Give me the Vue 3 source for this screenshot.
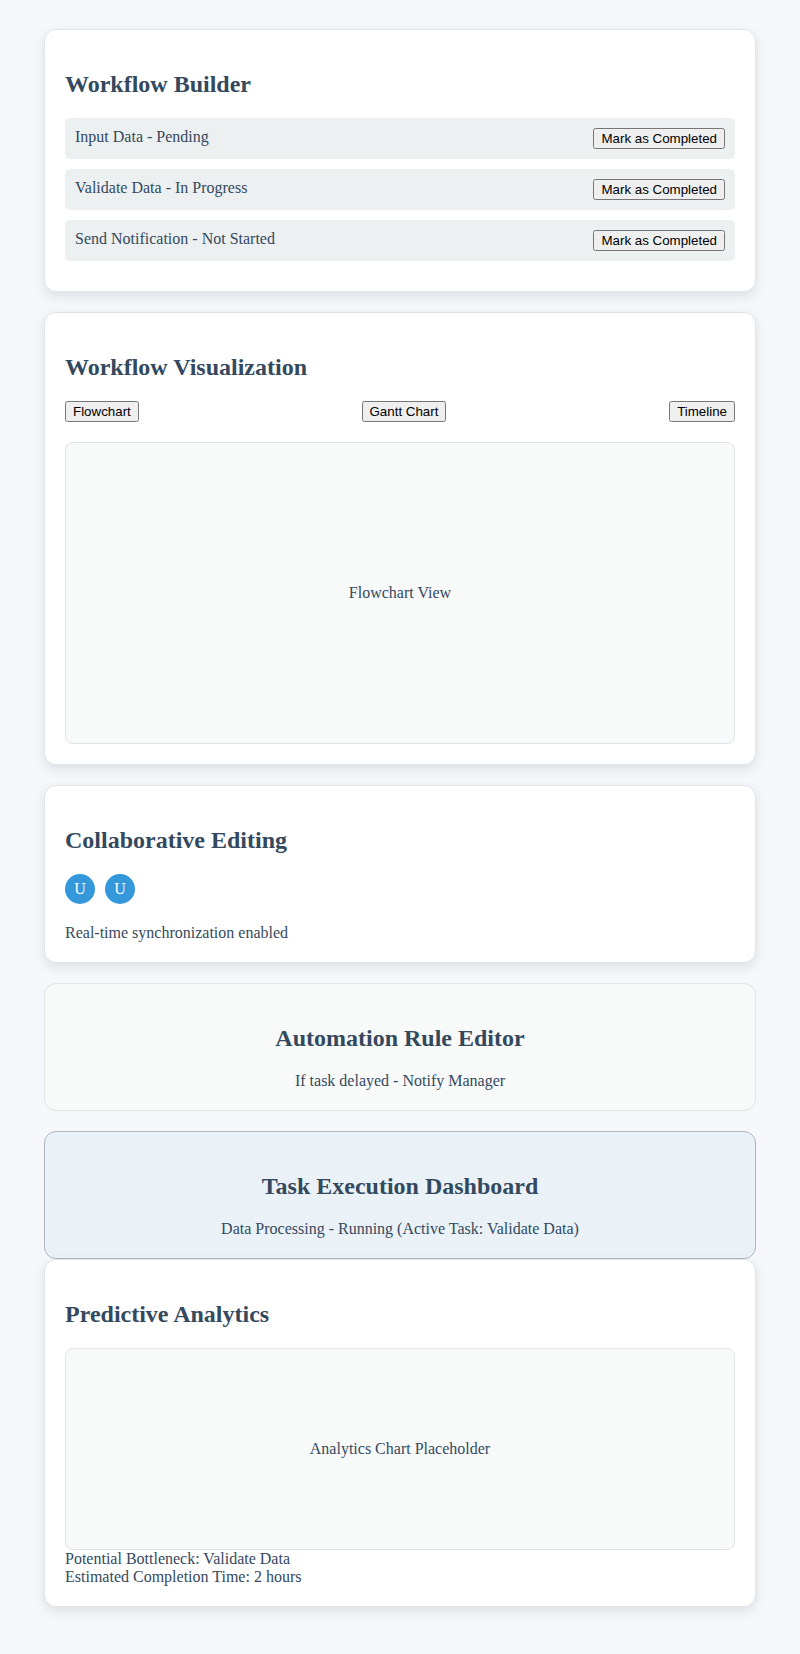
<script setup>
import { ref } from 'vue'

const tasks = ref([
  { name: 'Input Data', status: 'Pending' },
  { name: 'Validate Data', status: 'In Progress' },
  { name: 'Send Notification', status: 'Not Started' },
])
const views = ['Flowchart', 'Gantt Chart', 'Timeline']
const view = ref('Flowchart')
const users = ['User 1', 'User 2']
</script>

<template>
  <main class="page">
    <section class="card">
      <h2>Workflow Builder</h2>
      <ul class="tasks">
        <li v-for="task in tasks" :key="task.name" class="task">
          <span>{{ task.name }} - {{ task.status }}</span>
          <button type="button" @click="task.status = 'Completed'">Mark as Completed</button>
        </li>
      </ul>
    </section>

    <section class="card">
      <h2>Workflow Visualization</h2>
      <div class="views">
        <button v-for="name in views" :key="name" type="button" @click="view = name">{{ name }}</button>
      </div>
      <div class="canvas">{{ view }} View</div>
    </section>

    <section class="card">
      <h2>Collaborative Editing</h2>
      <div class="avatars">
        <div v-for="user in users" :key="user" class="avatar">{{ user[0] }}</div>
      </div>
      <div>Real-time synchronization enabled</div>
    </section>

    <section class="panel rules">
      <h2>Automation Rule Editor</h2>
      <div>If task delayed - Notify Manager</div>
    </section>

    <section class="panel dashboard">
      <h2>Task Execution Dashboard</h2>
      <div>Data Processing - Running (Active Task: Validate Data)</div>
    </section>

    <section class="card">
      <h2>Predictive Analytics</h2>
      <div class="canvas chart">Analytics Chart Placeholder</div>
      <div>Potential Bottleneck: Validate Data</div>
      <div>Estimated Completion Time: 2 hours</div>
    </section>
  </main>
</template>

<style>
body {
  margin: 0;
  background: #f5f7fb;
}
</style>

<style scoped>
.page {
  box-sizing: border-box;
  max-width: 1200px;
  margin: 0 auto;
  padding: 29px 44px 27px;
  color: #34495e;
  font-family: "Liberation Serif", "Times New Roman", serif;
  font-size: 16px;
  line-height: 18px;
}

.card,
.panel {
  padding: 20px;
  border: 1px solid #dfe6e9;
  border-radius: 12px;
}

.card {
  margin-bottom: 20px;
  background: #fff;
  box-shadow: 0 4px 12px rgba(0, 0, 0, 0.1);
}

h2 {
  margin: 20px 0;
  color: #34495e;
  font-size: 24px;
  line-height: 28px;
}

.tasks {
  margin: 0;
  padding: 0;
  list-style: none;
}

.task {
  display: flex;
  justify-content: space-between;
  margin-bottom: 10px;
  padding: 10px;
  border-radius: 5px;
  background: #ecf0f1;
}

button {
  font-family: "Liberation Sans", Arial, sans-serif;
}

.views {
  display: flex;
  justify-content: space-between;
  margin-bottom: 20px;
}

.canvas {
  display: flex;
  align-items: center;
  justify-content: center;
  height: 300px;
  border: 1px solid #e1e4e6;
  border-radius: 8px;
  background: #f8faf9;
}

.chart {
  height: 200px;
}

.avatars {
  display: flex;
  gap: 10px;
  margin-bottom: 20px;
}

.avatar {
  display: flex;
  align-items: center;
  justify-content: center;
  width: 30px;
  height: 30px;
  border-radius: 50%;
  background: #3498db;
  color: #fff;
}

.panel {
  text-align: center;
}

.rules {
  margin-bottom: 20px;
  border-color: #e1e4e6;
  background: #f8faf9;
}

.dashboard {
  border-color: #aeb6bf;
  background: #eaf2f8;
}
</style>
